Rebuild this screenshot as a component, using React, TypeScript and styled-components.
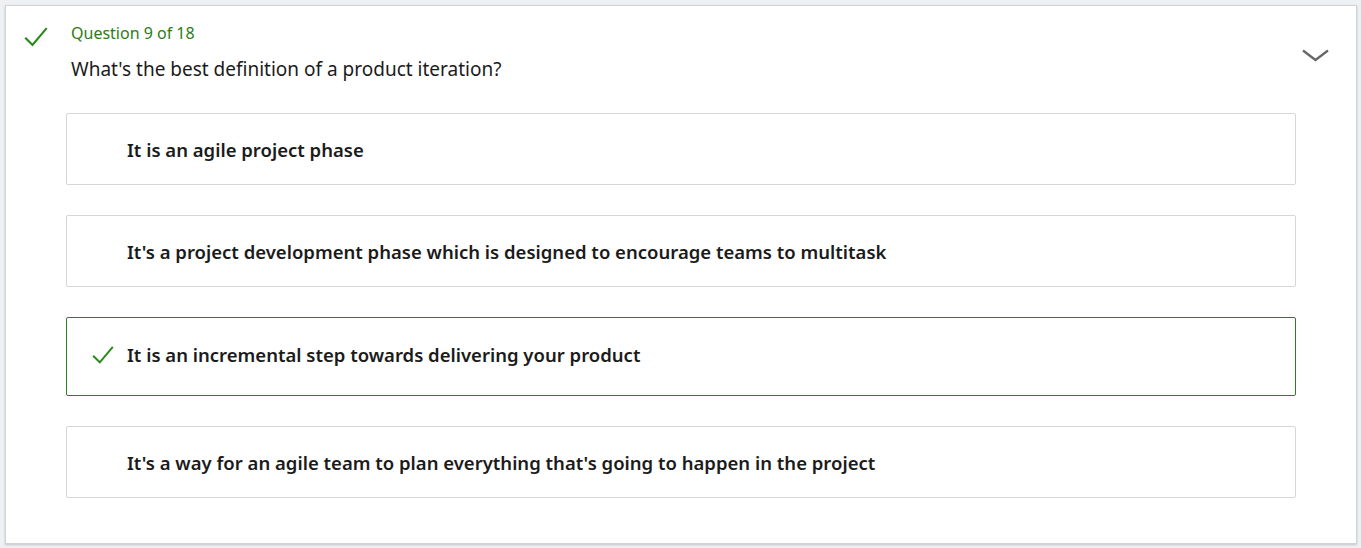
import React from 'react';
import styled, { createGlobalStyle } from 'styled-components';

const GlobalStyle = createGlobalStyle`
  body {
    margin: 0;
    background: #eef1f4;
    font-family: "Noto Sans", "Open Sans", sans-serif;
  }
`;

interface Option {
  id: number;
  text: string;
  correct?: boolean;
}

const options: Option[] = [
  { id: 1, text: 'It is an agile project phase' },
  { id: 2, text: "It's a project development phase which is designed to encourage teams to multitask" },
  { id: 3, text: 'It is an incremental step towards delivering your product', correct: true },
  { id: 4, text: "It's a way for an agile team to plan everything that's going to happen in the project" },
];

const CheckIcon = ({ size }: { size: number }) => (
  <svg width={size} height={size} viewBox="0 0 24 24" fill="none">
    <path d="M2 13.5 L8.5 20 L22 4" stroke="#2b8a1e" strokeWidth="2.2" strokeLinecap="square" />
  </svg>
);

const App = () => {
  return (
    <>
      <GlobalStyle />
      <Page>
        <Card>
          <Header>
            <StatusIcon>
              <CheckIcon size={24} />
            </StatusIcon>
            <HeaderText>
              <Label>Question 9 of 18</Label>
              <QuestionText>What's the best definition of a product iteration?</QuestionText>
            </HeaderText>
            <Chevron>
              <svg width="27" height="13" viewBox="0 0 27 13" fill="none">
                <path d="M1 1.5 L13.5 11 L26 1.5" stroke="#666" strokeWidth="2.2" />
              </svg>
            </Chevron>
          </Header>
          <OptionList>
            {options.map((o) => (
              <OptionBox key={o.id} $correct={!!o.correct}>
                <OptionMark>{o.correct && <CheckIcon size={22} />}</OptionMark>
                <OptionText>{o.text}</OptionText>
              </OptionBox>
            ))}
          </OptionList>
        </Card>
      </Page>
    </>
  );
};

const Page = styled.div`
  padding: 5px 4px 4px 5px;
  height: 548px;
  box-sizing: border-box;
`;

const Card = styled.div`
  background: #fff;
  border: 1px solid #d0d3d6;
  box-shadow: 0 1px 2px rgba(0, 0, 0, 0.18);
  height: 539px;
  box-sizing: border-box;
  padding: 0 60px;
`;

const Header = styled.div`
  display: flex;
  align-items: flex-start;
  padding-top: 16px;
  margin-left: -42px;
  margin-right: -33px;
`;

const StatusIcon = styled.div`
  width: 24px;
  height: 24px;
  margin-top: 3px;
  margin-right: 23px;
`;

const HeaderText = styled.div`
  flex: 1;
`;

const Label = styled.div`
  color: #2b7d14;
  font-size: 16px;
  line-height: 22px;
`;

const QuestionText = styled.div`
  color: #1b1b1b;
  font-size: 19px;
  line-height: 26px;
  margin-top: 12px;
`;

const Chevron = styled.div`
  margin-top: 23px;
`;

const OptionList = styled.div`
  display: flex;
  flex-direction: column;
  gap: 30px;
  margin-top: 31px;
`;

const OptionBox = styled.div<{ $correct: boolean }>`
  display: flex;
  align-items: center;
  height: ${({ $correct }) => ($correct ? '79px' : '72px')};
  padding-bottom: ${({ $correct }) => ($correct ? '4px' : '0')};
  border: 1px solid ${({ $correct }) => ($correct ? '#2e7d1e' : '#d6d6d6')};
  border-radius: 2px;
  box-sizing: border-box;
`;

const OptionMark = styled.div`
  width: 60px;
  display: flex;
  justify-content: flex-end;
  padding-right: 13px;
  box-sizing: border-box;
`;

const OptionText = styled.div`
  font-size: 18.5px;
  font-weight: 600;
  color: #1b1b1b;
`;

export default App;
